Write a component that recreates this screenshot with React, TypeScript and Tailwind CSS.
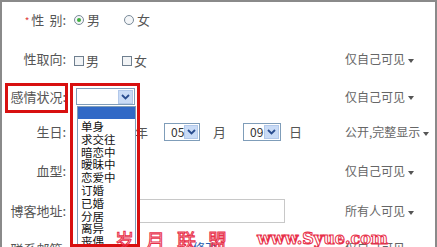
import React from 'react';

const FONT = { fontFamily: '"Noto Sans CJK SC", "Noto Sans", sans-serif' };

const statusOptions = ['单身', '求交往', '暗恋中', '暧昧中', '恋爱中', '订婚', '已婚', '分居', '离异', '丧偶'];

function Caret() {
	return <span className="ml-[3px] inline-block border-x-[3.5px] border-t-[4px] border-x-transparent border-t-[#555] align-middle" />;
}

function Visibility({ label }: { label: string }) {
	return (
		<div className="w-[90px] shrink-0 text-[12px] text-[#666] whitespace-nowrap">
			{label}
			<Caret />
		</div>
	);
}

function Radio({ checked }: { checked?: boolean }) {
	return (
		<span className="inline-flex w-[10px] h-[10px] rounded-full border border-[#7a8a99] bg-[#f4f6f8] items-center justify-center">
			{checked && <span className="w-[4px] h-[4px] rounded-full bg-[#3fae3f]" />}
		</span>
	);
}

function Check() {
	return <span className="inline-block w-[10px] h-[10px] border border-[#6f7f8f] bg-[#f2f4f6]" />;
}

function SelectArrow() {
	return (
		<span className="w-[15px] h-[14px] bg-[#c9dbf6] border border-[#b2c8ea] flex items-center justify-center">
			<svg width="9" height="6" viewBox="0 0 9 6">
				<path d="M1 1 L4.5 4.5 L8 1" stroke="#2a4d8f" strokeWidth="1.8" fill="none" />
			</svg>
		</span>
	);
}

function SmallSelect({ value, width }: { value: string; width: string }) {
	return (
		<span className={`${width} h-[18px] border border-[#7f9db9] bg-white flex items-center justify-between pl-[6px] pr-[1px] text-[12px] text-[#333]`}>
			{value}
			<SelectArrow />
		</span>
	);
}

function Label({ children }: { children: React.ReactNode }) {
	return <div className="w-[64px] shrink-0 text-right text-[13px] text-[#555] whitespace-nowrap">{children}</div>;
}

export default function App() {
	return (
		<div style={FONT} className="relative w-[437px] h-[247px] overflow-hidden bg-white border-t-2 border-l-2 border-r-2 border-[#8a8a8a]">
			<div className="flex items-center h-[36px]">
				<Label>
					<span className="text-[#e04040] text-[10px] mr-[2px]">*</span>性<span className="ml-[5px]">别:</span>
				</Label>
				<div className="flex-1 flex items-center gap-[3px] pl-[8px] text-[13px] text-[#555]">
					<Radio checked />
					<span>男</span>
					<span className="ml-[18px]" />
					<Radio />
					<span>女</span>
				</div>
			</div>

			<div className="flex items-center h-[42px]">
				<Label>性取向:</Label>
				<div className="flex-1 flex items-center gap-[2px] pl-[8px] text-[13px] text-[#555] pt-[3px]">
					<Check />
					<span>男</span>
					<span className="ml-[19px]" />
					<Check />
					<span>女</span>
				</div>
				<Visibility label="仅自己可见" />
			</div>

			<div className="flex items-center h-[33px]">
				<Label>感情状况:</Label>
				<div className="flex-1 pl-[10px]">
					<span className="w-[59px] h-[17px] border border-[#7f9db9] bg-white flex items-center justify-end pr-[1px]">
						<SelectArrow />
					</span>
				</div>
				<Visibility label="仅自己可见" />
			</div>

			<div className="flex items-center h-[38px]">
				<Label>生日:</Label>
				<div className="flex-1 flex items-center pl-[14px] text-[13px] text-[#555]">
					<SmallSelect value="1985" width="w-[50px]" />
					<span className="ml-[5px]">年</span>
					<span className="ml-[16px]" />
					<SmallSelect value="05" width="w-[36px]" />
					<span className="ml-[13px]">月</span>
					<span className="ml-[17px]" />
					<SmallSelect value="09" width="w-[38px]" />
					<span className="ml-[8px]">日</span>
				</div>
				<Visibility label="公开,完整显示" />
			</div>

			<div className="flex items-center h-[40px]">
				<Label>血型:</Label>
				<div className="flex-1" />
				<Visibility label="仅自己可见" />
			</div>

			<div className="flex items-center h-[40px]">
				<Label>博客地址:</Label>
				<div className="flex-1 pl-[71px]">
					<div className="w-[148px] h-[24px] border border-[#c8c8c8] bg-white" />
				</div>
				<Visibility label="所有人可见" />
			</div>

			<div className="flex items-start h-[20px] pt-[8px]">
				<Label>联系邮箱:</Label>
				<div className="flex-1 pl-[127px] text-[12px] text-[#2a5db0]">修改</div>
				<Visibility label="仅自己可见" />
			</div>

			{/* open dropdown list */}
			<div className="absolute left-[75px] top-[104px] w-[59px] border border-[#7f9db9] bg-white text-[11.5px] leading-[12.8px] text-[#111]">
				<div className="h-[12px] bg-[#3169c6]" />
				{statusOptions.map((o) => (
					<div key={o} className="pl-[3px] h-[12.8px] pt-[1px]">
						{o}
					</div>
				))}
			</div>

			{/* red highlight boxes */}
			<div className="absolute left-[3px] top-[81px] w-[63px] h-[30px] border-[3px] border-[#d81010]" />
			<div className="absolute left-[68px] top-[81px] w-[70px] h-[164px] border-[3px] border-[#d81010]" />

			{/* watermark */}
			<div className="absolute left-[113px] top-[223px] h-[24px] flex items-end gap-[18px] whitespace-nowrap leading-none">
				<span className="text-[19px] tracking-[12px] text-transparent [-webkit-text-stroke:1px_#e8304a]">岁月联盟</span>
				<span style={{ fontFamily: '"DejaVu Serif", serif' }} className="text-[16px] font-bold text-transparent [-webkit-text-stroke:1px_#e8304a] mb-[2px]">
					www.Syue.com
				</span>
			</div>
		</div>
	);
}
